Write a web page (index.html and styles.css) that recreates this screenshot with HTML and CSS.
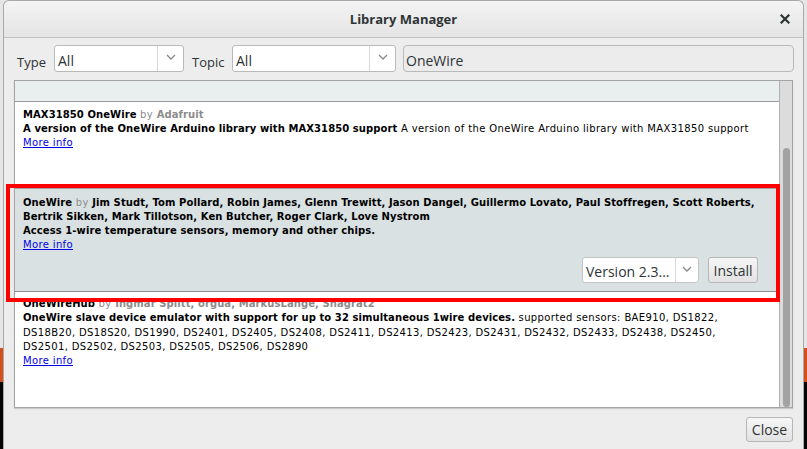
FILE: index.html
```html
<!DOCTYPE html>
<html>
<head>
<meta charset="utf-8">
<link rel="stylesheet" href="styles.css">
</head>
<body>
<div class="dialog">
  <header class="titlebar">
    <span class="title">Library Manager</span>
    <span class="close"><svg width="10" height="10" viewBox="0 0 10 10"><path d="M1.5 1.5L8.5 8.5M8.5 1.5L1.5 8.5" stroke="#2e3436" stroke-width="2.2" stroke-linecap="square"/></svg></span>
  </header>
  <div class="filters">
    <span class="label label-type">Type</span>
    <div class="select sel-type"><span class="sel-text">All</span><span class="sel-arrow"><svg width="10" height="6" viewBox="0 0 10 6"><path d="M1 1L5 5L9 1" fill="none" stroke="#8a8a8a" stroke-width="1.3"/></svg></span></div>
    <span class="label label-topic">Topic</span>
    <div class="select sel-topic"><span class="sel-text">All</span><span class="sel-arrow"><svg width="10" height="6" viewBox="0 0 10 6"><path d="M1 1L5 5L9 1" fill="none" stroke="#8a8a8a" stroke-width="1.3"/></svg></span></div>
    <div class="search">OneWire</div>
  </div>
  <div class="list">
    <div class="items">
      <div class="strip"></div>
      <div class="item item-first">
        <div class="line"><b>MAX31850 OneWire</b> <span class="by">by</span> <b class="gray">Adafruit</b></div>
        <div class="line"><b>A version of the OneWire Arduino library with MAX31850 support</b> A version of the OneWire Arduino library with MAX31850 support</div>
        <div class="line"><a class="more">More info</a></div>
      </div>
      <div class="item item-selected">
        <div class="line"><b>OneWire</b> <span class="by">by</span> <b>Jim Studt, Tom Pollard, Robin James, Glenn Trewitt, Jason Dangel, Guillermo Lovato, Paul Stoffregen, Scott Roberts,</b></div>
        <div class="line"><b>Bertrik Sikken, Mark Tillotson, Ken Butcher, Roger Clark, Love Nystrom</b></div>
        <div class="line"><b>Access 1-wire temperature sensors, memory and other chips.</b></div>
        <div class="line"><a class="more">More info</a></div>
        <div class="actions">
          <div class="select sel-version"><span class="sel-text">Version 2.3...</span><span class="sel-arrow"><svg width="10" height="6" viewBox="0 0 10 6"><path d="M1 1L5 5L9 1" fill="none" stroke="#8a8a8a" stroke-width="1.3"/></svg></span></div>
          <button class="btn btn-install">Install</button>
        </div>
      </div>
      <div class="item item-third">
        <div class="line"><b>OneWireHub</b> <span class="by">by</span> <b class="gray">Ingmar Splitt, orgua, MarkusLange, Shagrat2</b></div>
        <div class="line"><b>OneWire slave device emulator with support for up to 32 simultaneous 1wire devices.</b> supported sensors: BAE910, DS1822,</div>
        <div class="line">DS18B20, DS18S20, DS1990, DS2401, DS2405, DS2408, DS2411, DS2413, DS2423, DS2431, DS2432, DS2433, DS2438, DS2450,</div>
        <div class="line">DS2501, DS2502, DS2503, DS2505, DS2506, DS2890</div>
        <div class="line"><a class="more">More info</a></div>
      </div>
    </div>
    <div class="scrollbar"><div class="thumb"></div></div>
  </div>
  <div class="footer">
    <button class="btn btn-close">Close</button>
  </div>
</div>
<div class="highlight"></div>
</body>
</html>
```

FILE: styles.css
```css
* { box-sizing: border-box; }
html, body { margin: 0; padding: 0; }
body {
  width: 807px;
  height: 449px;
  overflow: hidden;
  position: relative;
  background: linear-gradient(to bottom, #e6e6e6 0, #e6e6e6 348px, #d4501a 348px, #d4501a 382px, #050505 382px);
  font-family: "Open Sans", "DejaVu Sans", sans-serif;
  color: #2e3436;
}
.dialog {
  margin-left: 3px;
  width: 801px;
  height: 449px;
  background: #ededed;
  border: 1px solid #a9a9a9;
  border-bottom: none;
  border-radius: 6px 6px 0 0;
  display: flex;
  flex-direction: column;
}
.titlebar {
  height: 37px;
  flex: none;
  border-bottom: 1px solid #c2c2c2;
  border-radius: 6px 6px 0 0;
  background: linear-gradient(to bottom, #f4f4f4, #e4e4e4);
  display: flex;
  align-items: center;
  justify-content: center;
  position: relative;
}
.title {
  font-weight: 700;
  font-size: 13px;
  color: #2e3436;
  margin-top: -1px;
}
.close {
  position: absolute;
  right: 13px;
  top: 13px;
  width: 10px;
  height: 10px;
  display: flex;
}
.filters {
  flex: none;
  display: flex;
  align-items: flex-start;
  padding: 7px 9px 0 13px;
  height: 42px;
}
.label {
  font-size: 13px;
  height: 27px;
  line-height: 34px;
  color: #2e3436;
  white-space: nowrap;
}
.label-type { width: 31px; margin-right: 6px; }
.label-topic { width: 35px; margin-left: 8px; margin-right: 5px; }
.select {
  height: 27px;
  background: #fff;
  border: 1px solid #b9b9b9;
  border-radius: 3px;
  display: flex;
  align-items: stretch;
  font-size: 14px;
}
.sel-text {
  flex: 1;
  padding-left: 3px;
  line-height: 29px;
  color: #2e3436;
  white-space: nowrap;
  overflow: hidden;
}
.sel-arrow {
  width: 26px;
  border-left: 1px solid #d8d8d8;
  display: flex;
  align-items: center;
  justify-content: center;
  padding-bottom: 3px;
}
.sel-type { width: 130px; }
.sel-topic { width: 164px; }
.search {
  flex: 1;
  margin-left: 7px;
  height: 27px;
  border: 1px solid #b9b9b9;
  border-radius: 4px;
  background: #ececec;
  font-size: 14px;
  line-height: 30px;
  padding-left: 2px;
  color: #2e3436;
}
.list {
  flex: none;
  margin: 0 10px 0 10px;
  height: 328px;
  border: 1px solid #a4a4a4;
  background: #fff;
  display: flex;
  box-shadow: 0 1px 1px rgba(0,0,0,0.15);
}
.items {
  flex: 1;
  overflow: hidden;
  font-family: "DejaVu Sans", sans-serif;
  font-size: 10px;
  letter-spacing: 0.36px;
  color: #000;
}
.strip {
  height: 21px;
  background: #e9efee;
  border-bottom: 1px solid #9c9c9c;
}
.item {
  padding-left: 8px;
  white-space: nowrap;
}
.line { height: 14px; line-height: 14px; }
.item b { font-weight: 700; letter-spacing: 0.08px; }
.by { color: #8c8c8c; }
.gray { color: #8c8c8c; }
.more { color: #0000e6; text-decoration: underline; }
.item-first { height: 86px; padding-top: 6px; }
.item-selected {
  height: 104px;
  padding-top: 7px;
  background: #d9e1e2;
  border-top: 1px solid #a0a0a0;
  border-bottom: 1px solid #8e8e8e;
}
.item-third { padding-top: 5px; }
.item-third .line { height: 14.3px; line-height: 14.3px; }
.actions {
  display: flex;
  justify-content: flex-end;
  margin-top: 5px;
  padding-right: 21px;
  gap: 9px;
  letter-spacing: 0;
}
.sel-version {
  width: 117px;
  height: 26px;
  border-color: #c4c4c4;
}
.sel-version .sel-text { line-height: 27px; padding-left: 3px; font-family: "Open Sans", sans-serif; }
.sel-version .sel-arrow { width: 23px; }
.btn {
  font-family: "Open Sans", sans-serif;
  font-size: 14px;
  color: #2e3436;
  border: 1px solid #b6b6b6;
  border-radius: 3px;
  background: linear-gradient(to bottom, #f6f6f6, #e2e2e2);
  padding: 0;
  margin: 0;
}
.btn-install { width: 50px; height: 26px; }
.scrollbar {
  width: 13px;
  flex: none;
  background: #dcdcdc;
  border-left: 1px solid #b0b0b0;
  position: relative;
}
.thumb {
  position: absolute;
  left: 3px;
  top: 67px;
  width: 7px;
  height: 259px;
  border-radius: 4px;
  background: #a2a2a2;
}
.footer {
  flex: 1;
  display: flex;
  justify-content: flex-end;
  align-items: flex-start;
  padding: 9px 10px 0 0;
}
.btn-close { width: 47px; height: 25px; }
.highlight {
  position: absolute;
  left: 6px;
  top: 184px;
  width: 774px;
  height: 118px;
  border: 4px solid #ff0000;
  pointer-events: none;
}
```
